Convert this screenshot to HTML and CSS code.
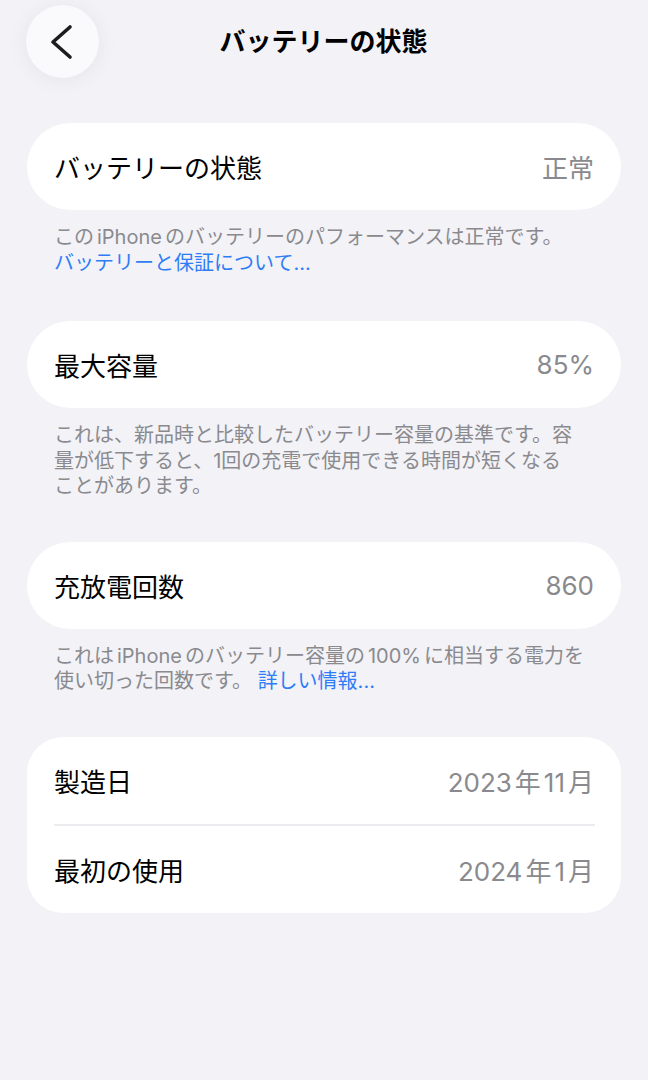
FILE: index.html
```html
<!DOCTYPE html>
<html lang="ja">
<head>
<meta charset="utf-8">
<title>バッテリーの状態</title>
<link rel="stylesheet" href="styles.css">
</head>
<body>
<div class="page">
  <header class="nav">
    <button class="back" aria-label="戻る">
      <svg width="73" height="73" viewBox="0 0 73 73">
        <polyline points="44,22 27,37 44,52" fill="none" stroke="#1c1c1e" stroke-width="3.6" stroke-linecap="round" stroke-linejoin="round"/>
      </svg>
    </button>
    <h1 class="title">バッテリーの状態</h1>
    <span class="spacer"></span>
  </header>

  <section class="group">
    <div class="card">
      <div class="row"><span class="label">バッテリーの状態</span><span class="value">正常</span></div>
    </div>
    <p class="note">この<span class="latin">iPhone</span>のバッテリーのパフォーマンスは正常です。<br><a class="link" href="#">バッテリーと保証について...</a></p>
  </section>

  <section class="group group-wide">
    <div class="card">
      <div class="row"><span class="label">最大容量</span><span class="value">85%</span></div>
    </div>
    <p class="note">これは、新品時と比較したバッテリー容量の基準です。容<br>量が低下すると、1回の充電で使用できる時間が短くなる<br>ことがあります。</p>
  </section>

  <section class="group">
    <div class="card">
      <div class="row"><span class="label">充放電回数</span><span class="value">860</span></div>
    </div>
    <p class="note">これは<span class="latin">iPhone</span>のバッテリー容量の<span class="latin">100%</span>に相当する電力を<br>使い切った回数です。 <a class="link" href="#">詳しい情報...</a></p>
  </section>

  <section class="group">
    <div class="card card-list">
      <div class="row"><span class="label">製造日</span><span class="value">2023<span class="unit">年</span>11<span class="unit">月</span></span></div>
      <div class="divider"></div>
      <div class="row"><span class="label">最初の使用</span><span class="value">2024<span class="unit">年</span>1<span class="unit">月</span></span></div>
    </div>
  </section>
</div>
</body>
</html>
```

FILE: styles.css
```css
html, body {
  margin: 0;
  padding: 0;
  background: #f2f2f7;
}

body {
  font-family: Inter, "Noto Sans CJK JP", sans-serif;
  color: #000;
  -webkit-font-smoothing: antialiased;
}

.page {
  padding: 5px 27px 0 27px;
}

/* top navigation: round back button + centered title */
.nav {
  display: grid;
  grid-template-columns: 73px 1fr 73px;
  align-items: center;
  height: 73px;
  margin-left: -1px;
}

.back {
  width: 73px;
  height: 73px;
  border: none;
  padding: 0;
  border-radius: 50%;
  background: #fafafc;
  box-shadow: 0 2px 22px rgba(0, 0, 0, 0.06);
  display: flex;
  align-items: center;
  justify-content: center;
}

.back svg {
  display: block;
}

.title {
  margin: 0;
  text-align: center;
  font-size: 26px;
  font-weight: 700;
  line-height: 1;
  color: #000;
}

.group {
  margin-top: 45px;
}

.group + .group {
  margin-top: 42px;
}

.group + .group-wide {
  margin-top: 45px;
}

.card {
  background: #fff;
  border-radius: 44px;
}

.card-list {
  border-radius: 36px;
}

.row {
  height: 87px;
  display: flex;
  align-items: center;
  justify-content: space-between;
  padding: 0 27px;
}

.label {
  font-size: 26px;
  color: #000;
}

.value {
  font-size: 26px;
  color: #8a8a8e;
}

.unit {
  margin: 0 3px;
}

.unit:last-child {
  margin-right: 0;
}

.divider {
  height: 2px;
  background: #ececf0;
  margin: 0 26px 0 27px;
}

.note {
  margin: 15px 0 0 0;
  padding: 0 27px;
  font-size: 20px;
  line-height: 25.5px;
  color: #8a8a8e;
  white-space: nowrap;
}

.latin {
  margin: 0 3px;
}

.link {
  color: #2f7df6;
  text-decoration: none;
}
```
